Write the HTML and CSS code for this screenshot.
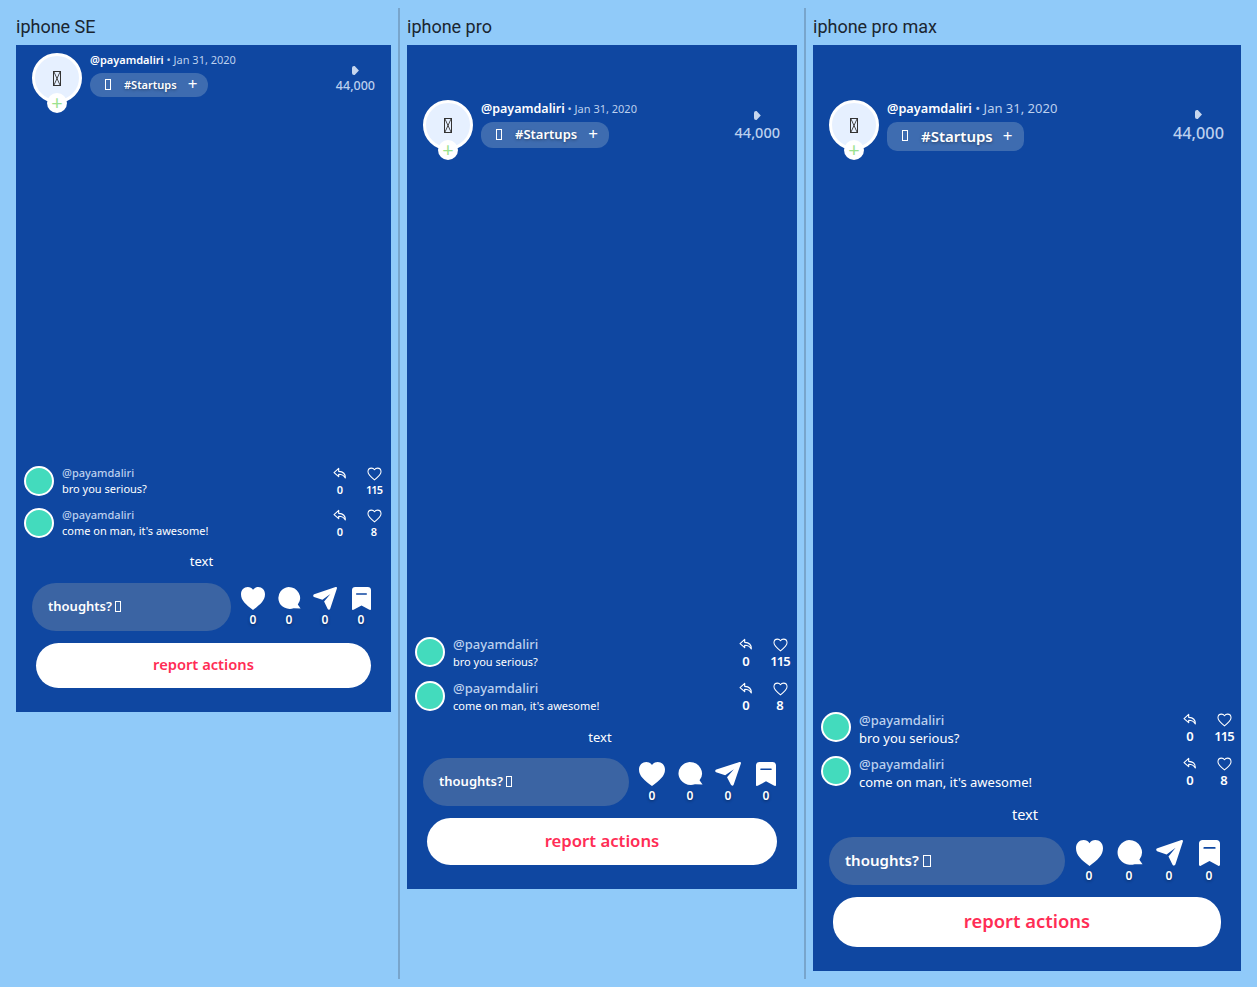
FILE: index.html
```html
<!DOCTYPE html>
<html lang="en">
  <head>
    <meta charset="UTF-8" />
    <meta name="viewport" content="width=device-width, initial-scale=1.0" />
    <title>Device previews</title>
    <link rel="stylesheet" href="styles.css">
  </head>
  <body>
    <svg class="sprites" width="0" height="0">
      <symbol id="i-reply" viewBox="0 0 16 14">
        <path d="M6.5 1.2 1.2 6l5.3 4.6V7.8c3.2 0 5.6.6 7.6 4.2.2-4.4-2.4-7.2-7.6-7.5z" fill="none" stroke="currentColor" stroke-width="1.3" stroke-linejoin="round"/>
      </symbol>
      <symbol id="i-heart-line" viewBox="0 0 16 15">
        <path d="M8 13.8C3.6 10.4 1 8.200 1 5.200 1 2.900 2.700 1.200 4.800 1.200 6.100 1.200 7.300 1.900 8 3c.7-1.100 1.900-1.800 3.200-1.800 2.100 0 3.800 1.700 3.800 4 0 3-2.600 5.200-7 8.600z" fill="none" stroke="currentColor" stroke-width="1.100" stroke-linejoin="round"/>
      </symbol>
      <symbol id="i-heart" viewBox="0 0 24 23" preserveAspectRatio="none">
        <path d="M12 23C5 17.500 0 13.600 0 7.200 0 3 3 0 6.800 0 8.900 0 10.900 1 12 2.800 13.100 1 15.100 0 17.200 0 21 0 24 3 24 7.200 24 13.600 19 17.500 12 23z" fill="currentColor"/>
      </symbol>
      <symbol id="i-bubble" viewBox="0 0 24 24" preserveAspectRatio="none">
        <path d="M11.500 0A11.500 11.500 0 0 1 20.800 18.300L23.600 22.400 16.600 22.300A11.500 11.500 0 1 1 11.500 0z" fill="currentColor"/>
      </symbol>
      <symbol id="i-send" viewBox="0 0 24 23" preserveAspectRatio="none">
        <path d="M22.600.1c.9-.3 1.600.5 1.300 1.300l-6.700 20.300c-.4 1.200-1.900 1.300-2.500.2l-3.600-7.400 6.300-7.600-8 5.900L1 9.900C-.2 9.300 0 7.700 1.200 7.300z" fill="currentColor"/>
      </symbol>
      <symbol id="i-mark" viewBox="0 0 18 23" preserveAspectRatio="none">
        <path d="M3 0h12c1.700 0 3 1.300 3 3v19c0 .8-.8 1.200-1.500.8L9 18.500 1.500 22.800C.8 23.200 0 22.800 0 22V3c0-1.700 1.300-3 3-3z" fill="currentColor"/>
        <path d="M4.500 7h9" stroke="#0f47a1" stroke-width="1.500" stroke-linecap="round"/>
      </symbol>
    </svg>

    <div class="devices">
      <div class="device">
        <h2 class="device-name">iphone SE</h2>
        <div class="frame frame-se">
          <div class="top">
            <div class="avatar">
              <span class="tofu tofu-x"></span>
              <span class="follow">+</span>
            </div>
            <div class="meta">
              <div class="byline"><b>@payamdaliri</b> • Jan 31, 2020</div>
              <div class="tag"><span class="tofu"></span><b>#Startups</b><span class="tag-plus">+</span></div>
            </div>
            <div class="views"><span class="play"></span>44,000</div>
          </div>
          <div class="bottom">
            <div class="comment">
              <span class="dot"></span>
              <div class="comment-body"><div class="handle">@payamdaliri</div><div>bro you serious?</div></div>
              <div class="stat"><svg class="reply"><use href="#i-reply"/></svg><b>0</b></div>
              <div class="stat"><svg class="like"><use href="#i-heart-line"/></svg><b class="tight">115</b></div>
            </div>
            <div class="comment">
              <span class="dot"></span>
              <div class="comment-body"><div class="handle">@payamdaliri</div><div>come on man, it's awesome!</div></div>
              <div class="stat"><svg class="reply"><use href="#i-reply"/></svg><b>0</b></div>
              <div class="stat"><svg class="like"><use href="#i-heart-line"/></svg><b>8</b></div>
            </div>
            <div class="caption">text</div>
            <div class="compose">
              <div class="thoughts">thoughts? <span class="tofu"></span></div>
              <div class="action"><svg class="a-heart"><use href="#i-heart"/></svg><b>0</b></div>
              <div class="action"><svg class="a-bubble"><use href="#i-bubble"/></svg><b>0</b></div>
              <div class="action"><svg class="a-send"><use href="#i-send"/></svg><b>0</b></div>
              <div class="action"><svg class="a-mark"><use href="#i-mark"/></svg><b>0</b></div>
            </div>
            <div class="report">report actions</div>
          </div>
        </div>
      </div>

      <div class="device">
        <h2 class="device-name">iphone pro</h2>
        <div class="frame frame-pro">
          <div class="top">
            <div class="avatar">
              <span class="tofu tofu-x"></span>
              <span class="follow">+</span>
            </div>
            <div class="meta">
              <div class="byline"><b>@payamdaliri</b> • Jan 31, 2020</div>
              <div class="tag"><span class="tofu"></span><b>#Startups</b><span class="tag-plus">+</span></div>
            </div>
            <div class="views"><span class="play"></span>44,000</div>
          </div>
          <div class="bottom">
            <div class="comment">
              <span class="dot"></span>
              <div class="comment-body"><div class="handle">@payamdaliri</div><div>bro you serious?</div></div>
              <div class="stat"><svg class="reply"><use href="#i-reply"/></svg><b>0</b></div>
              <div class="stat"><svg class="like"><use href="#i-heart-line"/></svg><b class="tight">115</b></div>
            </div>
            <div class="comment">
              <span class="dot"></span>
              <div class="comment-body"><div class="handle">@payamdaliri</div><div>come on man, it's awesome!</div></div>
              <div class="stat"><svg class="reply"><use href="#i-reply"/></svg><b>0</b></div>
              <div class="stat"><svg class="like"><use href="#i-heart-line"/></svg><b>8</b></div>
            </div>
            <div class="caption">text</div>
            <div class="compose">
              <div class="thoughts">thoughts? <span class="tofu"></span></div>
              <div class="action"><svg class="a-heart"><use href="#i-heart"/></svg><b>0</b></div>
              <div class="action"><svg class="a-bubble"><use href="#i-bubble"/></svg><b>0</b></div>
              <div class="action"><svg class="a-send"><use href="#i-send"/></svg><b>0</b></div>
              <div class="action"><svg class="a-mark"><use href="#i-mark"/></svg><b>0</b></div>
            </div>
            <div class="report">report actions</div>
          </div>
        </div>
      </div>

      <div class="device">
        <h2 class="device-name">iphone pro max</h2>
        <div class="frame frame-max">
          <div class="top">
            <div class="avatar">
              <span class="tofu tofu-x"></span>
              <span class="follow">+</span>
            </div>
            <div class="meta">
              <div class="byline"><b>@payamdaliri</b> • Jan 31, 2020</div>
              <div class="tag"><span class="tofu"></span><b>#Startups</b><span class="tag-plus">+</span></div>
            </div>
            <div class="views"><span class="play"></span>44,000</div>
          </div>
          <div class="bottom">
            <div class="comment">
              <span class="dot"></span>
              <div class="comment-body"><div class="handle">@payamdaliri</div><div>bro you serious?</div></div>
              <div class="stat"><svg class="reply"><use href="#i-reply"/></svg><b>0</b></div>
              <div class="stat"><svg class="like"><use href="#i-heart-line"/></svg><b class="tight">115</b></div>
            </div>
            <div class="comment">
              <span class="dot"></span>
              <div class="comment-body"><div class="handle">@payamdaliri</div><div>come on man, it's awesome!</div></div>
              <div class="stat"><svg class="reply"><use href="#i-reply"/></svg><b>0</b></div>
              <div class="stat"><svg class="like"><use href="#i-heart-line"/></svg><b>8</b></div>
            </div>
            <div class="caption">text</div>
            <div class="compose">
              <div class="thoughts">thoughts? <span class="tofu"></span></div>
              <div class="action"><svg class="a-heart"><use href="#i-heart"/></svg><b>0</b></div>
              <div class="action"><svg class="a-bubble"><use href="#i-bubble"/></svg><b>0</b></div>
              <div class="action"><svg class="a-send"><use href="#i-send"/></svg><b>0</b></div>
              <div class="action"><svg class="a-mark"><use href="#i-mark"/></svg><b>0</b></div>
            </div>
            <div class="report">report actions</div>
          </div>
        </div>
      </div>
    </div>
  </body>
</html>
```

FILE: styles.css
```css
html,
body {
  height: 100%;
}

body {
  background: #90caf9;
  margin: 0;
  padding: 8px;
  box-sizing: border-box;
  overflow: hidden;
  font-family: "Noto Sans", "Open Sans", sans-serif;
  color: #fff;
}

b {
  font-weight: 600;
}

.sprites {
  position: absolute;
}

.devices {
  display: flex;
  height: 971px;
}

.device {
  padding: 0 7px 0 8px;
  border-right: 2px solid #78a5cc;
  margin-right: -1px;
  flex: none;
}

.device:last-child {
  border-right: 0;
}

.device-name {
  margin: 0;
  height: 37px;
  padding-top: 8px;
  box-sizing: border-box;
  font: 400 18px/22px Roboto, sans-serif;
  color: #1a2530;
}

.frame {
  background: #0f47a1;
  display: flex;
  flex-direction: column;
  justify-content: space-between;
  box-sizing: border-box;
  padding-left: 8px;
  padding-right: 12px;
  padding-bottom: 24px;
}

.frame-se {
  width: 375px;
  height: 667px;
  padding-top: 8px;
  font-size: 11px;
}

.frame-pro {
  width: 390px;
  height: 844px;
  padding-top: 55px;
  font-size: 11px;
}

.frame-max {
  width: 428px;
  height: 926px;
  padding-top: 55px;
  font-size: 13px;
}

/* header row */
.top {
  display: flex;
  padding-left: 8px;
  padding-right: 4px;
}

.frame-pro .top,
.frame-max .top {
  padding-right: 5px;
}

.avatar {
  width: 44px;
  height: 44px;
  border: 3px solid #fff;
  border-radius: 50%;
  background: #e6f0ff;
  position: relative;
  display: flex;
  align-items: center;
  justify-content: center;
  flex: none;
}

.follow {
  position: absolute;
  left: 12px;
  bottom: -13px;
  width: 20px;
  height: 20px;
  border-radius: 50%;
  background: #fff;
  color: #9be28f;
  font: 400 20px/19px "Noto Sans", sans-serif;
  text-align: center;
}

.tofu {
  display: inline-block;
  width: 6px;
  height: 11px;
  border: 1px solid currentColor;
  box-sizing: border-box;
  vertical-align: -1px;
}

.tofu-x {
  width: 8px;
  height: 15px;
  color: #333;
  background: linear-gradient(to bottom right, transparent 42%, #444 50%, transparent 58%),
    linear-gradient(to bottom left, transparent 42%, #444 50%, transparent 58%);
}

.meta {
  margin-left: 8px;
  flex: 1;
}

.frame-pro .meta {
  margin-top: 2px;
}

.frame-max .meta {
  margin-top: 1px;
}

.byline {
  color: #bcd0ee;
  line-height: 14px;
}

.byline b {
  color: #fff;
}

.frame-pro .byline b {
  font-size: 12.500px;
}

.frame-max .byline b {
  font-size: 12.700px;
}

.tag {
  display: inline-flex;
  align-items: center;
  margin-top: 6px;
  height: 24px;
  padding: 0 11px 2px 15px;
  box-sizing: border-box;
  border-radius: 12px;
  background: #3e6cb0;
}

.tag b {
  margin-left: 13px;
  text-shadow: 0 1px 3px rgba(0, 0, 0, 0.4);
}

.tag-plus {
  margin-left: 11px;
  font-size: 17px;
  line-height: 20px;
}

.frame-pro .tag {
  height: 26px;
  border-radius: 12px;
}

.frame-pro .tag b {
  font-size: 13px;
}

.frame-max .tag {
  height: 29px;
  margin-top: 7px;
  padding-right: 11px;
  border-radius: 10px;
}

.frame-max .tag b {
  font-size: 15px;
}

.frame-max .tag-plus {
  margin-left: 10px;
}

.views {
  display: flex;
  flex-direction: column;
  align-items: center;
  color: #bcd0ee;
  margin-top: 13px;
  font-size: 12.500px;
  font-weight: 500;
  line-height: 16px;
}

.frame-pro .views {
  margin-top: 11px;
  font-size: 14.500px;
}

.frame-max .views {
  margin-top: 10px;
  font-size: 16.300px;
}

.play {
  width: 7px;
  height: 9px;
  margin-bottom: 3px;
  background: #c6d6ee;
  border-radius: 2px;
  clip-path: polygon(0 0, 40% 0, 100% 50%, 40% 100%, 0 100%);
}

.frame-pro .play {
  margin-bottom: 4px;
}

.frame-max .play {
  margin-bottom: 6px;
}

/* comments */
.comment {
  display: flex;
  align-items: flex-start;
  height: 32px;
  margin-bottom: 10px;
  margin-right: -12px;
}

.frame-pro .comment,
.frame-max .comment {
  height: 34px;
}

.dot {
  width: 30px;
  height: 30px;
  box-sizing: border-box;
  border: 2px solid #fff;
  border-radius: 50%;
  background: #43dbbd;
  flex: none;
}

.comment-body {
  margin-left: 8px;
  margin-top: -1px;
  flex: 1;
  line-height: 16px;
}

.frame-pro .comment-body {
  line-height: 17px;
}

.frame-max .comment-body {
  line-height: 18px;
}

.handle {
  color: #bcd0ee;
  font-weight: 500;
}

.frame-pro .handle {
  font-size: 13px;
}

.stat {
  width: 34px;
  margin-top: 1px;
  display: flex;
  flex-direction: column;
  align-items: center;
  line-height: 16px;
}

.frame-pro .stat,
.frame-max .stat {
  font-size: 13px;
  line-height: 17px;
}

.tight {
  letter-spacing: -1px;
}

.reply {
  width: 14px;
  height: 13px;
  margin-bottom: 2px;
}

.like {
  width: 15px;
  height: 14px;
  margin-bottom: 1px;
}

.caption {
  text-align: center;
  font-size: 13px;
  line-height: 18px;
  margin: 12px 0 13px;
}

.frame-pro .caption {
  margin: 13px 0 12px;
}

.frame-max .caption {
  font-size: 14.500px;
  margin: 15px 0 14px;
}

/* input and actions */
.compose {
  display: flex;
  align-items: flex-start;
  padding-left: 8px;
}

.thoughts {
  flex: 1;
  height: 48px;
  padding-left: 16px;
  border-radius: 24px;
  background: #3b64a3;
  font-size: 13px;
  font-weight: 600;
  line-height: 46px;
  margin-right: 4px;
}

.frame-max .thoughts {
  font-size: 15px;
}

.frame-max .thoughts .tofu {
  width: 8px;
  height: 12px;
}

.action {
  width: 36px;
  margin-top: 4px;
  display: flex;
  flex-direction: column;
  align-items: center;
  font-size: 12px;
  line-height: 14px;
  text-shadow: 0 1px 3px rgba(0, 0, 0, 0.4);
}

.action svg {
  width: 24px;
  height: 23px;
  margin-bottom: 3px;
}

.action .a-mark {
  width: 19px;
}

.frame-pro .action {
  width: 38px;
}

.frame-pro .action svg {
  width: 26px;
  height: 24px;
}

.frame-pro .action .a-mark {
  width: 20px;
}

.frame-max .action {
  width: 40px;
  margin-top: 3px;
}

.frame-max .action svg {
  width: 27px;
  height: 26px;
}

.frame-max .action .a-mark {
  width: 21px;
}

.report {
  margin: 12px 8px 0 12px;
  height: 45px;
  border-radius: 24px;
  background: #fff;
  color: #ff2d55;
  font-size: 14.700px;
  font-weight: 600;
  line-height: 43px;
  text-align: center;
}

.frame-pro .report {
  height: 47px;
  font-size: 16.700px;
  line-height: 45px;
}

.frame-max .report {
  height: 50px;
  font-size: 18.400px;
  line-height: 48px;
}
```
